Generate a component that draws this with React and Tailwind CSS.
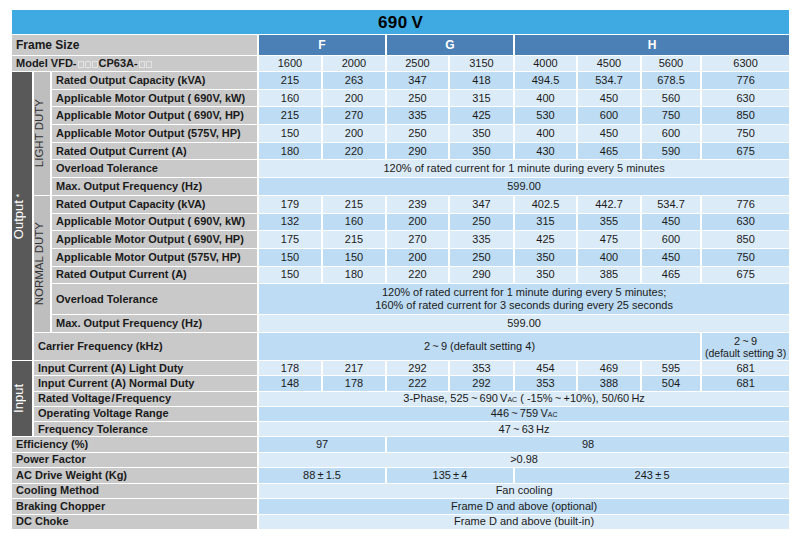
// 690V spec table, VFD-CP63A series
const LIGHT = 'bg-[#dcebf8]';
const MID = 'bg-[#bedcf3]';
const LABEL = 'bg-[#c9c9c9] font-bold text-left pl-1 whitespace-nowrap';
const B = 'border-x-2 border-y border-white';

const vac = (
  <span className="text-[7px] font-normal">AC</span>
);

const lightDuty = [
  ['Rated Output Capacity (kVA)', ['215', '263', '347', '418', '494.5', '534.7', '678.5', '776']],
  ['Applicable Motor Output ( 690V, kW)', ['160', '200', '250', '315', '400', '450', '560', '630']],
  ['Applicable Motor Output ( 690V, HP)', ['215', '270', '335', '425', '530', '600', '750', '850']],
  ['Applicable Motor Output (575V, HP)', ['150', '200', '250', '350', '400', '450', '600', '750']],
  ['Rated Output Current (A)', ['180', '220', '290', '350', '430', '465', '590', '675']],
];

const normalDuty = [
  ['Rated Output Capacity (kVA)', ['179', '215', '239', '347', '402.5', '442.7', '534.7', '776']],
  ['Applicable Motor Output ( 690V, kW)', ['132', '160', '200', '250', '315', '355', '450', '630']],
  ['Applicable Motor Output ( 690V, HP)', ['175', '215', '270', '335', '425', '475', '600', '850']],
  ['Applicable Motor Output (575V, HP)', ['150', '150', '200', '250', '350', '400', '450', '750']],
  ['Rated Output Current (A)', ['150', '180', '220', '290', '350', '385', '465', '675']],
];

function Cells({ values, bg }) {
  return values.map((c, i) => {
    const cell = typeof c === 'string' ? { v: c } : c;
    return (
      <td key={i} colSpan={cell.span || 1} className={`${bg} ${B} text-center`}>
        {cell.v}
      </td>
    );
  });
}

function Vertical({ children, className }) {
  return (
    <div className={`[writing-mode:vertical-rl] rotate-180 mx-auto whitespace-nowrap ${className}`}>
      {children}
    </div>
  );
}

// placeholder boxes in the model number
function Boxes({ n }) {
  return (
    <span className="inline-flex gap-[1px] mx-[1px] align-[-1px]">
      {Array.from({ length: n }).map((_, i) => (
        <span key={i} className="inline-block w-[6px] h-[7px] border border-[#e2e2e2]" />
      ))}
    </span>
  );
}

export default function App() {
  const overloadLD = '120% of rated current for 1 minute during every 5 minutes';
  return (
    <div className="w-[800px] h-[538px] bg-white pt-[9px] pl-[10px] text-[11px] leading-none text-[#1a1a1a] font-['Liberation_Sans',Arial,sans-serif]">
      <table className="table-fixed border-collapse w-[779px]">
        <colgroup>
          <col className="w-[22px]" />
          <col className="w-[18px]" />
          <col className="w-[207px]" />
          <col className="w-[64px]" />
          <col className="w-[64px]" />
          <col className="w-[63px]" />
          <col className="w-[65px]" />
          <col className="w-[63px]" />
          <col className="w-[64px]" />
          <col className="w-[60px]" />
          <col className="w-[89px]" />
        </colgroup>
        <tbody>
          <tr className="h-[25px]">
            <td colSpan={11} className={`bg-[#3fa9e1] ${B} text-center text-[17px] font-bold text-black tracking-wide`}>
              690&#8201;V
            </td>
          </tr>
          <tr className="h-[21px]">
            <td colSpan={3} className={`${LABEL} ${B} text-[12px]`}>Frame Size</td>
            <td colSpan={2} className={`bg-[#4a80b6] ${B} text-center font-bold text-white text-[12px]`}>F</td>
            <td colSpan={2} className={`bg-[#4a80b6] ${B} text-center font-bold text-white text-[12px]`}>G</td>
            <td colSpan={4} className={`bg-[#4a80b6] ${B} text-center font-bold text-white text-[12px]`}>H</td>
          </tr>
          <tr className="h-[16px]">
            <td colSpan={3} className={`${LABEL} ${B}`}>
              Model VFD-<Boxes n={3} />CP63A-<Boxes n={2} />
            </td>
            <Cells bg={LIGHT} values={['1600', '2000', '2500', '3150', '4000', '4500', '5600', '6300']} />
          </tr>

          {lightDuty.map(([label, vals], i) => (
            <tr key={label + 'ld'} className="h-[17.7px]">
              {i === 0 && (
                <td rowSpan={15} className={`bg-[#595959] ${B} text-white text-[13px] font-normal`}>
                  <Vertical>Output <span className="relative -top-[1px] text-[9px]">*</span></Vertical>
                </td>
              )}
              {i === 0 && (
                <td rowSpan={7} className={`bg-[#bebebe] ${B} text-[#333] text-[11.5px]`}>
                  <Vertical>LIGHT DUTY</Vertical>
                </td>
              )}
              <td className={`${LABEL} ${B}`}>{label}</td>
              <Cells bg={i % 2 === 0 ? MID : LIGHT} values={vals} />
            </tr>
          ))}
          <tr className="h-[17.7px]">
            <td className={`${LABEL} ${B}`}>Overload Tolerance</td>
            <Cells bg={LIGHT} values={[{ v: overloadLD, span: 8 }]} />
          </tr>
          <tr className="h-[17.7px]">
            <td className={`${LABEL} ${B}`}>Max. Output Frequency (Hz)</td>
            <Cells bg={MID} values={[{ v: '599.00', span: 8 }]} />
          </tr>

          {normalDuty.map(([label, vals], i) => (
            <tr key={label + 'nd'} className="h-[17.7px]">
              {i === 0 && (
                <td rowSpan={7} className={`bg-[#bebebe] ${B} text-[#333] text-[11.5px]`}>
                  <Vertical>NORMAL DUTY</Vertical>
                </td>
              )}
              <td className={`${LABEL} ${B}`}>{label}</td>
              <Cells bg={i % 2 === 0 ? LIGHT : MID} values={vals} />
            </tr>
          ))}
          <tr className="h-[31px]">
            <td className={`${LABEL} ${B}`}>Overload Tolerance</td>
            <td colSpan={8} className={`${MID} ${B} text-center leading-[13px]`}>
              120% of rated current for 1 minute during every 5 minutes;
              <br />
              160% of rated current for 3 seconds during every 25 seconds
            </td>
          </tr>
          <tr className="h-[18px]">
            <td className={`${LABEL} ${B}`}>Max. Output Frequency (Hz)</td>
            <Cells bg={LIGHT} values={[{ v: '599.00', span: 8 }]} />
          </tr>
          <tr className="h-[28px]">
            <td colSpan={2} className={`${LABEL} ${B}`}>Carrier Frequency (kHz)</td>
            <td colSpan={7} className={`${MID} ${B} text-center`}>2&#8201;~&#8201;9 (default setting 4)</td>
            <td className={`${MID} ${B} text-center leading-[12px]`}>
              2&#8201;~&#8201;9
              <br />
              <span className="text-[10.5px]">(default setting 3)</span>
            </td>
          </tr>

          <tr className="h-[15.2px]">
            <td rowSpan={5} className={`bg-[#595959] ${B} text-white text-[13px]`}>
              <Vertical>Input</Vertical>
            </td>
            <td colSpan={2} className={`${LABEL} ${B}`}>Input Current (A) Light Duty</td>
            <Cells bg={LIGHT} values={['178', '217', '292', '353', '454', '469', '595', '681']} />
          </tr>
          <tr className="h-[15.2px]">
            <td colSpan={2} className={`${LABEL} ${B}`}>Input Current (A) Normal Duty</td>
            <Cells bg={MID} values={['148', '178', '222', '292', '353', '388', '504', '681']} />
          </tr>
          <tr className="h-[15.2px]">
            <td colSpan={2} className={`${LABEL} ${B}`}>Rated Voltage&#8202;/&#8202;Frequency</td>
            <td colSpan={8} className={`${LIGHT} ${B} text-center`}>
              3-Phase, 525&#8201;~&#8201;690&#8201;V{vac} ( -15%&#8201;~&#8201;+10%), 50/60&#8201;Hz
            </td>
          </tr>
          <tr className="h-[15.2px]">
            <td colSpan={2} className={`${LABEL} ${B}`}>Operating Voltage Range</td>
            <td colSpan={8} className={`${MID} ${B} text-center`}>446&#8201;~&#8201;759&#8201;V{vac}</td>
          </tr>
          <tr className="h-[15.2px]">
            <td colSpan={2} className={`${LABEL} ${B}`}>Frequency Tolerance</td>
            <td colSpan={8} className={`${LIGHT} ${B} text-center`}>47&#8201;~&#8201;63&#8201;Hz</td>
          </tr>

          <tr className="h-[15.5px]">
            <td colSpan={3} className={`${LABEL} ${B}`}>Efficiency (%)</td>
            <Cells bg={MID} values={[{ v: '97', span: 2 }, { v: '98', span: 6 }]} />
          </tr>
          <tr className="h-[15.5px]">
            <td colSpan={3} className={`${LABEL} ${B}`}>Power Factor</td>
            <Cells bg={LIGHT} values={[{ v: '>0.98', span: 8 }]} />
          </tr>
          <tr className="h-[15.5px]">
            <td colSpan={3} className={`${LABEL} ${B}`}>AC Drive Weight (Kg)</td>
            <Cells
              bg={MID}
              values={[
                { v: '88\u2009±\u20091.5', span: 2 },
                { v: '135\u2009±\u20094', span: 2 },
                { v: '243\u2009±\u20095', span: 4 },
              ]}
            />
          </tr>
          <tr className="h-[15.5px]">
            <td colSpan={3} className={`${LABEL} ${B}`}>Cooling Method</td>
            <Cells bg={LIGHT} values={[{ v: 'Fan cooling', span: 8 }]} />
          </tr>
          <tr className="h-[15.5px]">
            <td colSpan={3} className={`${LABEL} ${B}`}>Braking Chopper</td>
            <Cells bg={MID} values={[{ v: 'Frame D and above (optional)', span: 8 }]} />
          </tr>
          <tr className="h-[15.5px]">
            <td colSpan={3} className={`${LABEL} ${B}`}>DC Choke</td>
            <Cells bg={LIGHT} values={[{ v: 'Frame D and above (built-in)', span: 8 }]} />
          </tr>
        </tbody>
      </table>
    </div>
  );
}
